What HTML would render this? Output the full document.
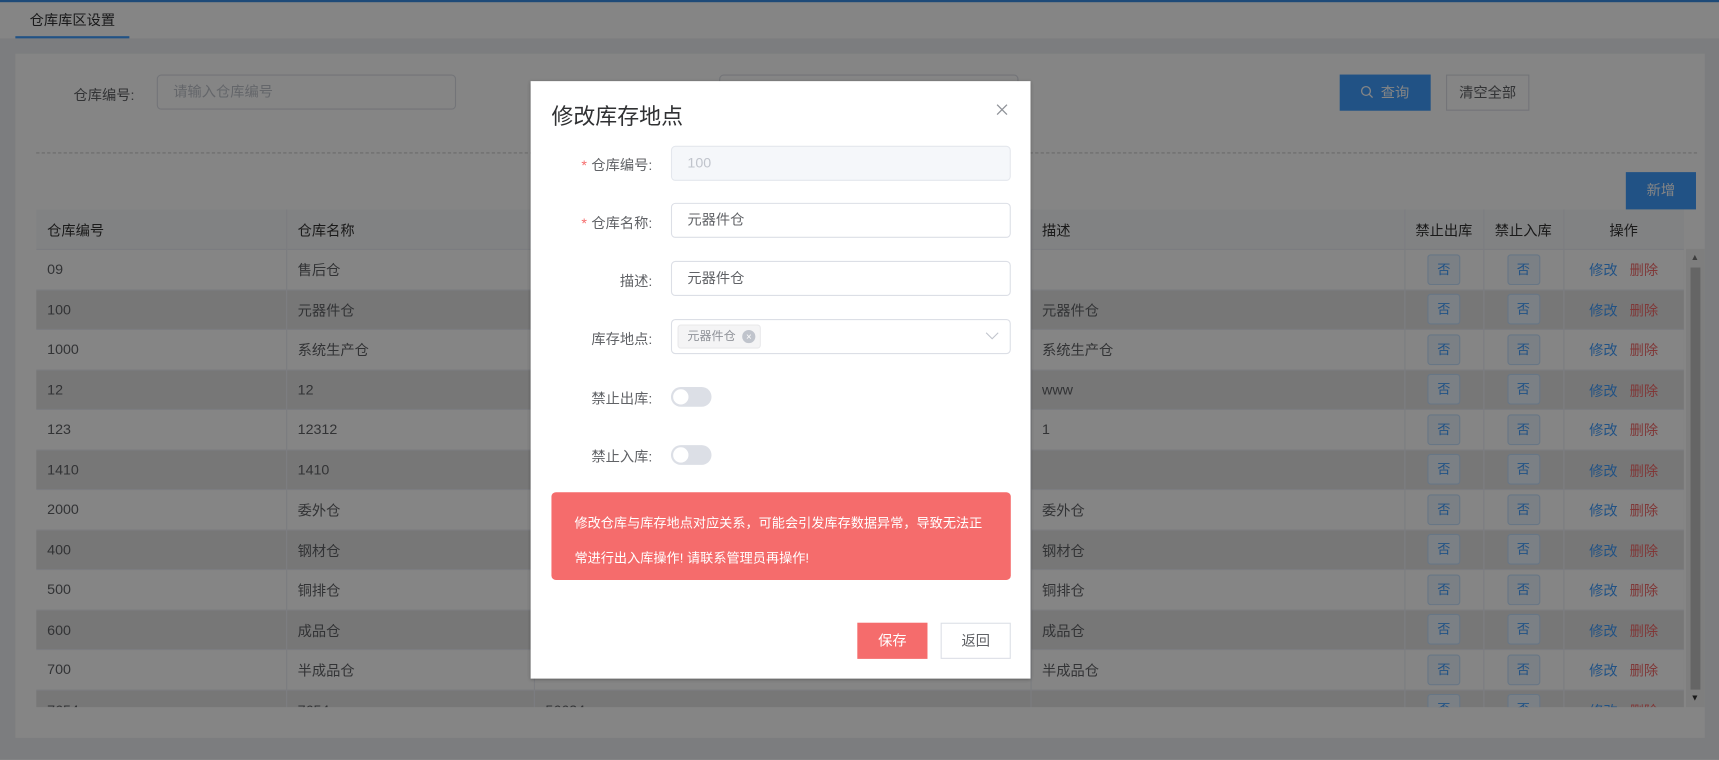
<!DOCTYPE html>
<html><head><meta charset="utf-8"><style>
*{box-sizing:border-box;margin:0;padding:0}
html,body{width:1719px;height:760px;overflow:hidden;background:#7c7c7c}
#w{position:absolute;left:0;top:0;width:1568px;height:693px;transform:scale(1.09631);transform-origin:0 0;font-family:"Liberation Sans","Noto Sans CJK SC",sans-serif;color:#606266;background:#eef0f3}
.a{position:absolute}
.tab{left:0;top:0;width:1568px;height:35px;background:#fff;border-top:2px solid #3a8ee6}
.card{left:14px;top:49px;width:1541px;height:624px;background:#fff}
.inp{border:1px solid #dcdfe6;border-radius:4px;background:#fff;font-size:13px;padding-left:14px;line-height:30px}
table{border-collapse:collapse;font-size:13px;color:#606266;table-layout:fixed}
td,th{height:36.5px;border-bottom:1px solid #ebeef5;border-right:1px solid #ebeef5;padding-left:10px;text-align:left;font-weight:normal;white-space:nowrap;overflow:hidden}
th{background:#f8f9fb;color:#333}
tr.s td{background:#e4e4e4}
.no{display:inline-block;width:30px;height:28px;line-height:26px;text-align:center;border:1px solid #c6e2ff;background:#ecf5ff;color:#409eff;border-radius:3px;font-size:12px}
.c{text-align:center;padding-left:0}
.ov{left:0;top:0;width:1568px;height:693px;background:rgba(0,0,0,.478)}
.m{left:484px;top:74px;width:456px;height:545px;background:#fff;box-shadow:0 1px 3px rgba(0,0,0,.3)}
.lb{font-size:13px;color:#606266;text-align:right;width:111px;left:0}
.lb i{color:#f56c6c;font-style:normal;margin-right:4px}
.mi{left:128px;width:310px;height:32px;border:1px solid #dcdfe6;border-radius:4px;font-size:13px;color:#606266;padding-left:14px;line-height:30px}
.sw{left:128px;width:37px;height:18px;border-radius:9px;background:#dcdfe6}
.sw:after{content:"";position:absolute;left:2px;top:2px;width:14px;height:14px;border-radius:50%;background:#fff}
</style></head><body><div id="w">
<div class="a tab"><div class="a" style="left:14px;top:0;width:104px;height:33px;border-bottom:2px solid #409eff;font-size:13px;color:#303133;text-align:center;line-height:33px">仓库库区设置</div></div>
<div class="a card"></div>
<div class="a" style="left:67px;top:76px;font-size:13px;color:#606266">仓库编号:</div>
<div class="a inp" style="left:143px;top:68px;width:273px;height:32px;color:#c0c4cc">请输入仓库编号</div>
<div class="a inp" style="left:656px;top:68px;width:273px;height:32px"></div>
<div class="a" style="left:1222px;top:68px;width:83px;height:33px;background:#409eff;color:#fff;font-size:13px;line-height:33px;text-align:center"><svg width="12" height="12" viewBox="0 0 12 12" style="vertical-align:-1px;margin-right:6px"><circle cx="5" cy="5" r="4" fill="none" stroke="#fff" stroke-width="1.2"/><path d="M8 8l3 3" stroke="#fff" stroke-width="1.2"/></svg>查询</div>
<div class="a" style="left:1319px;top:68px;width:76px;height:33px;border:1px solid #dcdfe6;background:#fff;color:#606266;font-size:13px;line-height:31px;text-align:center">清空全部</div>
<div class="a" style="left:33px;top:139px;width:1515px;border-top:1px dashed #ccc"></div>
<div class="a" style="left:1483px;top:157px;width:64px;height:34px;background:#409eff;color:#fff;font-size:13px;line-height:34px;text-align:center">新增</div>
<div class="a" style="left:33px;top:191px;width:1503px;height:454px;overflow:hidden">
<table style="width:1503px">
<colgroup><col style="width:228px"><col style="width:226px"><col style="width:453px"><col style="width:341px"><col style="width:72px"><col style="width:73px"><col style="width:110px"></colgroup>
<tr><th>仓库编号</th><th>仓库名称</th><th></th><th>描述</th><th class="c">禁止出库</th><th class="c">禁止入库</th><th class="c">操作</th></tr>
<tr><td>09</td><td>售后仓</td><td></td><td></td><td class="c"><span class="no">否</span></td><td class="c"><span class="no">否</span></td><td class="c"><span style="color:#409eff">修改</span>&nbsp;&nbsp;&nbsp;<span style="color:#f56c6c">删除</span></td></tr>
<tr class="s"><td>100</td><td>元器件仓</td><td></td><td>元器件仓</td><td class="c"><span class="no">否</span></td><td class="c"><span class="no">否</span></td><td class="c"><span style="color:#409eff">修改</span>&nbsp;&nbsp;&nbsp;<span style="color:#f56c6c">删除</span></td></tr>
<tr><td>1000</td><td>系统生产仓</td><td></td><td>系统生产仓</td><td class="c"><span class="no">否</span></td><td class="c"><span class="no">否</span></td><td class="c"><span style="color:#409eff">修改</span>&nbsp;&nbsp;&nbsp;<span style="color:#f56c6c">删除</span></td></tr>
<tr class="s"><td>12</td><td>12</td><td></td><td>www</td><td class="c"><span class="no">否</span></td><td class="c"><span class="no">否</span></td><td class="c"><span style="color:#409eff">修改</span>&nbsp;&nbsp;&nbsp;<span style="color:#f56c6c">删除</span></td></tr>
<tr><td>123</td><td>12312</td><td></td><td>1</td><td class="c"><span class="no">否</span></td><td class="c"><span class="no">否</span></td><td class="c"><span style="color:#409eff">修改</span>&nbsp;&nbsp;&nbsp;<span style="color:#f56c6c">删除</span></td></tr>
<tr class="s"><td>1410</td><td>1410</td><td></td><td></td><td class="c"><span class="no">否</span></td><td class="c"><span class="no">否</span></td><td class="c"><span style="color:#409eff">修改</span>&nbsp;&nbsp;&nbsp;<span style="color:#f56c6c">删除</span></td></tr>
<tr><td>2000</td><td>委外仓</td><td></td><td>委外仓</td><td class="c"><span class="no">否</span></td><td class="c"><span class="no">否</span></td><td class="c"><span style="color:#409eff">修改</span>&nbsp;&nbsp;&nbsp;<span style="color:#f56c6c">删除</span></td></tr>
<tr class="s"><td>400</td><td>钢材仓</td><td></td><td>钢材仓</td><td class="c"><span class="no">否</span></td><td class="c"><span class="no">否</span></td><td class="c"><span style="color:#409eff">修改</span>&nbsp;&nbsp;&nbsp;<span style="color:#f56c6c">删除</span></td></tr>
<tr><td>500</td><td>铜排仓</td><td></td><td>铜排仓</td><td class="c"><span class="no">否</span></td><td class="c"><span class="no">否</span></td><td class="c"><span style="color:#409eff">修改</span>&nbsp;&nbsp;&nbsp;<span style="color:#f56c6c">删除</span></td></tr>
<tr class="s"><td>600</td><td>成品仓</td><td></td><td>成品仓</td><td class="c"><span class="no">否</span></td><td class="c"><span class="no">否</span></td><td class="c"><span style="color:#409eff">修改</span>&nbsp;&nbsp;&nbsp;<span style="color:#f56c6c">删除</span></td></tr>
<tr><td>700</td><td>半成品仓</td><td></td><td>半成品仓</td><td class="c"><span class="no">否</span></td><td class="c"><span class="no">否</span></td><td class="c"><span style="color:#409eff">修改</span>&nbsp;&nbsp;&nbsp;<span style="color:#f56c6c">删除</span></td></tr>
<tr class="s"><td>7654</td><td>7654</td><td>56634</td><td></td><td class="c"><span class="no">否</span></td><td class="c"><span class="no">否</span></td><td class="c"><span style="color:#409eff">修改</span>&nbsp;&nbsp;&nbsp;<span style="color:#f56c6c">删除</span></td></tr>
</table></div>
<div class="a" style="left:1538px;top:227px;width:17px;height:418px;background:#f1f1f1"><div class="a" style="left:4px;top:17px;width:9px;height:385px;background:#c1c1c1"></div><div class="a" style="left:4px;top:3px;font-size:8px;color:#777">▲</div><div class="a" style="left:4px;top:405px;font-size:8px;color:#333">▼</div></div>
<div class="a ov"></div>
<div class="a m">
<div class="a" style="left:19px;top:16px;font-size:20px;color:#303133">修改库存地点</div>
<svg class="a" style="left:425px;top:21px" width="10" height="10" viewBox="0 0 10 10"><path d="M0.5 0.5l9 9M9.5 0.5l-9 9" stroke="#909399" stroke-width="1.2"/></svg>
<div class="a lb" style="top:66px"><i>*</i>仓库编号:</div>
<div class="a mi" style="top:59px;background:#f5f7fa;color:#c0c4cc;border-color:#e4e7ed">100</div>
<div class="a lb" style="top:119px"><i>*</i>仓库名称:</div>
<div class="a mi" style="top:111px">元器件仓</div>
<div class="a lb" style="top:172px">描述:</div>
<div class="a mi" style="top:164px">元器件仓</div>
<div class="a lb" style="top:225px">库存地点:</div>
<div class="a mi" style="top:217px;padding-left:5px"><span style="display:inline-block;height:22px;line-height:20px;margin-top:4px;vertical-align:top;background:#f4f4f5;border:1px solid #e9e9eb;border-radius:3px;font-size:11px;color:#909399;padding:0 4px 0 8px">元器件仓 <span style="display:inline-block;width:12px;height:12px;border-radius:50%;background:#c0c4cc;color:#fff;font-size:9px;line-height:12px;text-align:center;margin-left:3px">×</span></span><svg style="position:absolute;right:10px;top:11px" width="12" height="7" viewBox="0 0 12 7"><path d="M0.5 0.5l5.5 5.5 5.5-5.5" fill="none" stroke="#c0c4cc" stroke-width="1"/></svg></div>
<div class="a lb" style="top:279px">禁止出库:</div>
<div class="a sw" style="top:279px"></div>
<div class="a lb" style="top:332px">禁止入库:</div>
<div class="a sw" style="top:332px"></div>
<div class="a" style="left:19px;top:375px;width:419px;height:80px;background:#f56c6c;border-radius:4px;color:#fff;font-size:12px;padding:12px 0 0 21px;line-height:32px">修改仓库与库存地点对应关系，可能会引发库存数据异常，导致无法正<br>常进行出入库操作! 请联系管理员再操作!</div>
<div class="a" style="left:298px;top:494px;width:64px;height:33px;background:#f56c6c;color:#fff;font-size:13px;line-height:33px;text-align:center">保存</div>
<div class="a" style="left:374px;top:494px;width:64px;height:33px;border:1px solid #dcdfe6;color:#606266;font-size:13px;line-height:31px;text-align:center">返回</div>
</div>
</div></body></html>
